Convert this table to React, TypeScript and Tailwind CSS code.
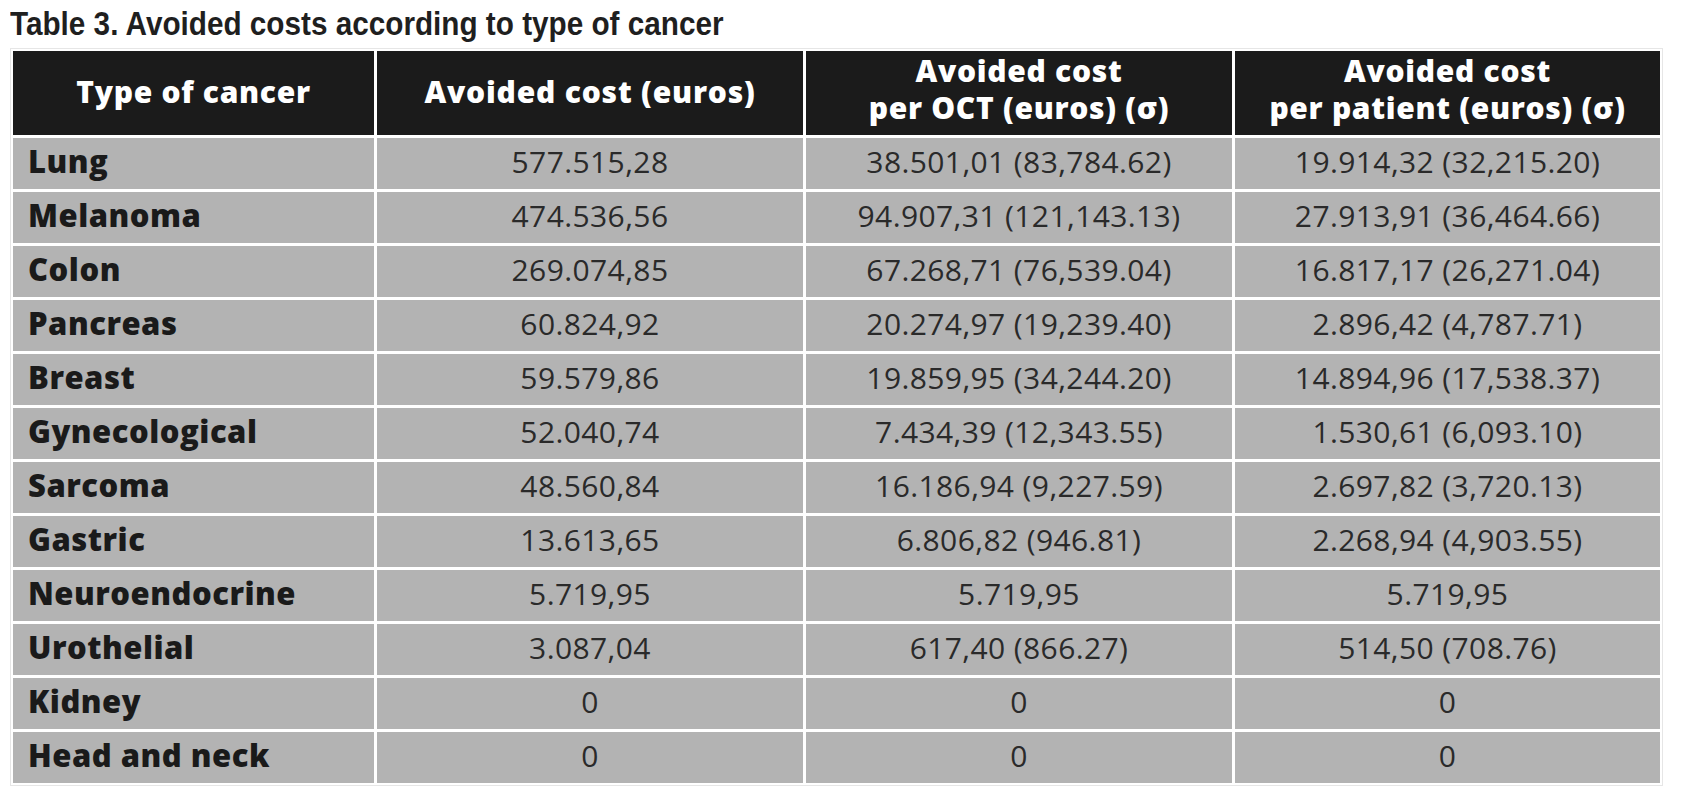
const rows: [string, string, string, string][] = [
  ["Lung", "577.515,28", "38.501,01 (83,784.62)", "19.914,32 (32,215.20)"],
  ["Melanoma", "474.536,56", "94.907,31 (121,143.13)", "27.913,91 (36,464.66)"],
  ["Colon", "269.074,85", "67.268,71 (76,539.04)", "16.817,17 (26,271.04)"],
  ["Pancreas", "60.824,92", "20.274,97 (19,239.40)", "2.896,42 (4,787.71)"],
  ["Breast", "59.579,86", "19.859,95 (34,244.20)", "14.894,96 (17,538.37)"],
  ["Gynecological", "52.040,74", "7.434,39 (12,343.55)", "1.530,61 (6,093.10)"],
  ["Sarcoma", "48.560,84", "16.186,94 (9,227.59)", "2.697,82 (3,720.13)"],
  ["Gastric", "13.613,65", "6.806,82 (946.81)", "2.268,94 (4,903.55)"],
  ["Neuroendocrine", "5.719,95", "5.719,95", "5.719,95"],
  ["Urothelial", "3.087,04", "617,40 (866.27)", "514,50 (708.76)"],
  ["Kidney", "0", "0", "0"],
  ["Head and neck", "0", "0", "0"],
];

export default function App() {
  return (
    <div className="min-h-[804px] w-[1682px] bg-white font-['Open_Sans',sans-serif]">
      <h1 className="pl-[10px] pt-[4px] text-[33px] font-bold leading-[40px] text-[#1f1f1f] font-['Liberation_Sans',Arial,sans-serif]">
        <span className="inline-block origin-left scale-x-[0.9] whitespace-nowrap">
          Table 3. Avoided costs according to type of cancer
        </span>
      </h1>

      <div className="ml-[10px] mt-[4px] w-[1653px] border border-[#e6e6e6] p-[2px]">
        <div className="grid grid-cols-[361px_426px_426px_425px] gap-[3px]">
          {/* header */}
          <div className="flex h-[84px] items-center justify-center bg-[#1b1b1b] pb-[4px] text-[30px] font-extrabold tracking-[0.7px] text-white">
            Type of cancer
          </div>
          <div className="flex h-[84px] items-center justify-center bg-[#1b1b1b] pb-[4px] text-[30px] font-extrabold tracking-[0.8px] text-white">
            Avoided cost (euros)
          </div>
          <div className="flex h-[84px] flex-col items-center justify-center bg-[#1b1b1b] pb-[8px] text-[30px] font-extrabold leading-[37px] tracking-[0.7px] text-white">
            <span>Avoided cost</span>
            <span>per OCT (euros) (σ)</span>
          </div>
          <div className="flex h-[84px] flex-col items-center justify-center bg-[#1b1b1b] pb-[8px] text-[30px] font-extrabold leading-[37px] tracking-[0.7px] text-white">
            <span>Avoided cost</span>
            <span>per patient (euros) (σ)</span>
          </div>

          {rows.map((r) => (
            <div key={r[0]} className="contents">
              <div className="flex h-[51px] items-center bg-[#b3b3b3] pb-[4px] pl-[15px] text-[31px] font-extrabold tracking-[0.5px] text-[#1a1a1a]">
                {r[0]}
              </div>
              <div className="flex h-[51px] items-center justify-center bg-[#b3b3b3] pb-[4px] text-[30px] tracking-[0.4px] text-[#2a2a2a]">
                {r[1]}
              </div>
              <div className="flex h-[51px] items-center justify-center bg-[#b3b3b3] pb-[4px] text-[30px] tracking-[0.4px] text-[#2a2a2a]">
                {r[2]}
              </div>
              <div className="flex h-[51px] items-center justify-center bg-[#b3b3b3] pb-[4px] text-[30px] tracking-[0.4px] text-[#2a2a2a]">
                {r[3]}
              </div>
            </div>
          ))}
        </div>
      </div>
    </div>
  );
}
